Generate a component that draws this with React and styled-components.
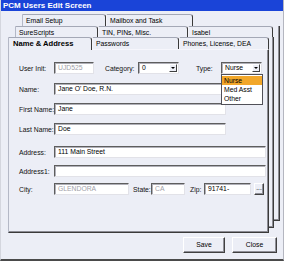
import React from 'react';
import styled, { createGlobalStyle } from 'styled-components';

const Global = createGlobalStyle`
  html, body { margin: 0; padding: 0; background: #ffffff; }
  body { font-family: "Liberation Sans", Arial, sans-serif; }
  * { box-sizing: border-box; }
`;

const BG = '#eceef6';

const Window = styled.div`
  width: 284px;
  height: 261px;
  background: ${BG};
  border-left: 1px solid #d4d6de;
  border-right: 1px solid #b4b6c0;
  border-bottom: 2px solid #4a4a4a;
  display: flex;
  flex-direction: column;
  font-size: 6.8px;
  color: #000;
`;

const TitleBar = styled.div`
  height: 11px;
  background: #1a44d8;
  color: #fff;
  font-weight: bold;
  font-size: 8px;
  line-height: 11px;
  padding-left: 2px;
  white-space: nowrap;
`;

const Deck = styled.div`
  position: relative;
  margin-top: 3px;
  display: flex;
  flex-direction: column;
`;

const BackPage = styled.div`
  position: absolute;
  left: 7px;
  top: ${p => p.$top}px;
  width: ${p => p.$w}px;
  height: ${p => p.$h}px;
  z-index: ${p => p.$z};
  background: ${BG};
  border-right: 1px solid #3c3c3c;
  border-bottom: 1px solid #3c3c3c;
  box-shadow: inset -1px -1px 0 #8c8c94;
`;

const TabRow = styled.div`
  position: relative;
  z-index: 3;
  display: flex;
  height: ${p => p.$h}px;
  margin-left: ${p => p.$ml}px;
`;

const Tab = styled.div`
  position: relative;
  width: ${p => p.$w}px;
  height: ${p => (p.$active ? p.$h + 1 : p.$h)}px;
  background: ${BG};
  border-top: 1px solid #a4a8b6;
  border-left: 1px solid ${p => (p.$first ? '#b4b8c6' : '#f4f4fa')};
  border-right: 1px solid #3a3a3a;
  border-top-right-radius: 3px;
  padding-left: ${p => (p.$active ? 4 : 3)}px;
  padding-top: 1px;
  line-height: ${p => p.$h - 2}px;
  font-size: ${p => (p.$active ? '7.6px' : '6.8px')};
  font-weight: ${p => (p.$active ? 'bold' : 'normal')};
  white-space: nowrap;
  overflow: hidden;
  z-index: ${p => (p.$active ? 2 : 1)};
`;

const Panel = styled.div`
  position: relative;
  z-index: 2;
  margin-left: 7px;
  width: 261px;
  height: 184px;
  background: ${BG};
  border-top: 1px solid #f6f6fc;
  border-left: 1px solid #b4b8c6;
  border-right: 1px solid #3a3a3a;
  border-bottom: 1px solid #3a3a3a;
  box-shadow: inset -1px -1px 0 #8c8c94;
  padding: 12px 0 0 10px;
  display: flex;
  flex-direction: column;
`;

const Row = styled.div`
  display: flex;
  align-items: center;
  height: 12px;
  margin-top: ${p => p.$mt || 0}px;
`;

const Label = styled.div`
  width: ${p => p.$w}px;
  margin-left: ${p => p.$ml || 0}px;
  white-space: nowrap;
  color: #101010;
`;

const Field = styled.div`
  position: relative;
  width: ${p => p.$w}px;
  height: 12px;
  margin-left: ${p => p.$ml || 0}px;
  background: #fff;
  border-top: 1px solid #5e5e5e;
  border-left: 1px solid #5e5e5e;
  border-bottom: 1px solid #e2e2e8;
  border-right: 1px solid #e2e2e8;
  box-shadow: inset 1px 1px 0 #b0b0b8;
  padding-left: 3px;
  line-height: 10px;
  white-space: nowrap;
  color: ${p => (p.$dim ? '#a0a0a8' : '#000')};
`;

const ArrowBtn = styled.div`
  position: absolute;
  right: 1px;
  top: 1px;
  width: 8px;
  height: 8px;
  background: ${BG};
  border-top: 1px solid #fff;
  border-left: 1px solid #fff;
  border-right: 1px solid #404040;
  border-bottom: 1px solid #404040;
  display: flex;
  align-items: center;
  justify-content: center;
  &::after {
    content: '';
    border-left: 2px solid transparent;
    border-right: 2px solid transparent;
    border-top: 2px solid #000;
  }
`;

const DropList = styled.div`
  position: absolute;
  left: -1px;
  top: 11px;
  width: 42px;
  background: #fff;
  border: 1px solid #505058;
  z-index: 5;
  padding: 1px 0 1px;
`;

const DropItem = styled.div`
  height: 9px;
  line-height: 9px;
  padding-left: 2px;
  background: ${p => (p.$sel ? '#f2a72a' : 'transparent')};
  color: #000;
`;

const SmallBtn = styled.div`
  width: 10px;
  height: 12px;
  margin-left: ${p => p.$ml || 0}px;
  background: ${BG};
  border-top: 1px solid #fff;
  border-left: 1px solid #fff;
  border-right: 1px solid #404040;
  border-bottom: 1px solid #404040;
  box-shadow: inset -1px -1px 0 #909098;
  text-align: center;
  line-height: 8px;
  font-size: 6.5px;
`;

const ButtonBar = styled.div`
  display: flex;
  justify-content: flex-end;
  gap: 7px;
  margin-top: 4px;
  padding-right: 6px;
`;

const Button = styled.div`
  width: ${p => p.$w}px;
  height: 16px;
  background: ${BG};
  border-top: 1px solid #fff;
  border-left: 1px solid #fff;
  border-right: 1px solid #404040;
  border-bottom: 1px solid #404040;
  box-shadow: inset -1px -1px 0 #909098;
  text-align: center;
  line-height: 14px;
  font-size: 6.8px;
`;

const rows = [
  { ml: 21, h: 12, tabs: [['Email Setup', 84], ['Mailbox and Task', 87]] },
  { ml: 14, h: 11, tabs: [['SureScripts', 83], ['TIN, PINs, Misc.', 90], ['Isabel', 85]] },
  { ml: 7, h: 12, tabs: [['Name & Address', 84, true], ['Passwords', 87], ['Phones, License, DEA', 90]] },
];

export default function App() {
  return (
    <>
      <Global />
      <Window>
        <TitleBar>PCM Users Edit Screen</TitleBar>
        <Deck>
          <BackPage $top={12} $w={272} $h={195} $z={0} />
          <BackPage $top={23} $w={266} $h={191} $z={1} />
          {rows.map((r, i) => (
            <TabRow key={i} $ml={r.ml} $h={r.h}>
              {r.tabs.map(([t, w, active], j) => (
                <Tab key={t} $w={w} $h={r.h} $active={active} $first={j === 0}>
                  {t}
                </Tab>
              ))}
            </TabRow>
          ))}
          <Panel>
            <Row>
              <Label $w={35}>User Init:</Label>
              <Field $w={40} $dim>UJD525</Field>
              <Label $w={33} $ml={11}>Category:</Label>
              <Field $w={41}>
                0
                <ArrowBtn />
              </Field>
              <Label $w={25} $ml={17}>Type:</Label>
              <Field $w={41}>
                Nurse
                <ArrowBtn />
                <DropList>
                  <DropItem $sel>Nurse</DropItem>
                  <DropItem>Med Asst</DropItem>
                  <DropItem>Other</DropItem>
                </DropList>
              </Field>
            </Row>
            <Row $mt={9}>
              <Label $w={35}>Name:</Label>
              <Field $w={172}>Jane O' Doe, R.N.</Field>
            </Row>
            <Row $mt={8}>
              <Label $w={35}>First Name:</Label>
              <Field $w={172}>Jane</Field>
            </Row>
            <Row $mt={8}>
              <Label $w={35}>Last Name:</Label>
              <Field $w={172}>Doe</Field>
            </Row>
            <Row $mt={11}>
              <Label $w={35}>Address:</Label>
              <Field $w={212}>111 Main Street</Field>
            </Row>
            <Row $mt={7}>
              <Label $w={35}>Address1:</Label>
              <Field $w={212}></Field>
            </Row>
            <Row $mt={6}>
              <Label $w={35}>City:</Label>
              <Field $w={75} $dim>GLENDORA</Field>
              <Label $w={18} $ml={4}>State:</Label>
              <Field $w={34} $dim>CA</Field>
              <Label $w={14} $ml={5}>Zip:</Label>
              <Field $w={47}>91741-</Field>
              <SmallBtn $ml={3}>...</SmallBtn>
            </Row>
          </Panel>
        </Deck>
        <ButtonBar>
          <Button $w={42}>Save</Button>
          <Button $w={45}>Close</Button>
        </ButtonBar>
      </Window>
    </>
  );
}
